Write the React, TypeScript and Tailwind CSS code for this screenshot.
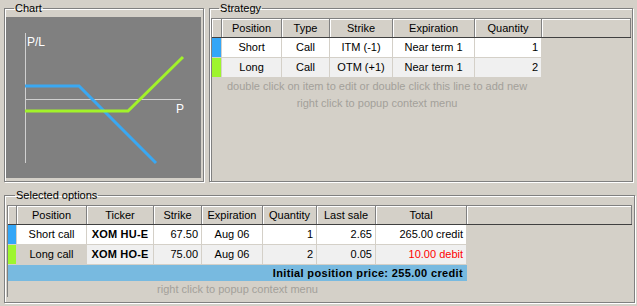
import React from 'react'

const BLUE = '#33a6f7'
const GREEN = '#9ef52e'

function GroupBox({ title, className, children }: { title: string; className: string; children: React.ReactNode }) {
  return (
    <fieldset className={`border border-[#808080] shadow-[inset_1px_1px_0_#fff,1px_1px_0_#fff] ${className}`}>
      <legend className="ml-[8px] px-[1px] leading-[13px]">{title}</legend>
      {children}
    </fieldset>
  )
}

function HeaderCell({ w, label }: { w?: number; label?: string }) {
  return (
    <div
      className={`h-full flex items-center justify-center border-r border-[#808080] shadow-[inset_1px_1px_0_#fff] ${w ? 'shrink-0' : 'flex-1'}`}
      style={w ? { width: w } : undefined}
    >
      {label}
    </div>
  )
}

type Cell = { text: string; align?: 'c' | 'r'; bold?: boolean; red?: boolean; bg?: string }

function DataRow({ widths, color, cells, bg }: { widths: number[]; color: string; cells: Cell[]; bg: string }) {
  return (
    <div className="flex h-[20px]">
      <div className="shrink-0 border-r border-b border-[#d4d0c8]" style={{ width: widths[0], background: color }} />
      {cells.map((c, i) => (
        <div
          key={i}
          className={`shrink-0 flex items-center border-r border-b border-[#d4d0c8] ${c.align === 'r' ? 'justify-end pr-[3px]' : 'justify-center'} ${c.bold ? 'font-bold tracking-[0.2px]' : ''} ${c.red ? 'text-[#ff0000]' : ''}`}
          style={{ width: widths[i + 1], background: c.bg ?? bg }}
        >
          {c.text}
        </div>
      ))}
    </div>
  )
}

function Chart() {
  return (
    <svg width="195" height="161" className="block">
      <rect width="195" height="161" fill="#808080" />
      <line x1="19.5" y1="16" x2="19.5" y2="146" stroke="#d0d0d0" strokeWidth="1" />
      <line x1="19" y1="82.5" x2="175" y2="82.5" stroke="#d0d0d0" strokeWidth="1" />
      <polyline points="19,69 73,69 150,146" fill="none" stroke="#3aa8f2" strokeWidth="3" />
      <polyline points="19,94 122,94 177,40" fill="none" stroke="#a2f22a" strokeWidth="3" />
      <text x="21" y="29" fill="#fff" fontSize="12" fontFamily="Liberation Sans, sans-serif">P/L</text>
      <text x="170" y="96" fill="#fff" fontSize="12" fontFamily="Liberation Sans, sans-serif">P</text>
    </svg>
  )
}

const stratW = [11, 60, 48, 63, 82, 67]
const selW = [10, 70, 67, 48, 61, 54, 59, 91]

export default function App() {
  return (
    <div className="w-[637px] h-[306px] bg-[#d4d0c8] font-['Liberation_Sans',sans-serif] text-[11px] text-black overflow-hidden">
      <div className="flex gap-[5px] px-[4px] pt-[2px]">
        <GroupBox title="Chart" className="w-[201px] h-[180px] px-[1px] pt-[2px]">
          <Chart />
        </GroupBox>
        <GroupBox title="Strategy" className="w-[426px] h-[180px] px-[1px] pt-[3px]">
          <div className="border-l border-t border-[#808080] h-[163px]">
            <div className="flex h-[19px] border-b border-[#404040]">
              <HeaderCell w={stratW[0] - 1} />
              <HeaderCell w={stratW[1]} label="Position" />
              <HeaderCell w={stratW[2]} label="Type" />
              <HeaderCell w={stratW[3]} label="Strike" />
              <HeaderCell w={stratW[4]} label="Expiration" />
              <HeaderCell w={stratW[5]} label="Quantity" />
              <HeaderCell />
            </div>
            <DataRow
              widths={[stratW[0] - 1, ...stratW.slice(1)]}
              color={BLUE}
              bg="#ffffff"
              cells={[
                { text: 'Short' },
                { text: 'Call' },
                { text: 'ITM (-1)' },
                { text: 'Near term 1' },
                { text: '1', align: 'r' },
              ]}
            />
            <DataRow
              widths={[stratW[0] - 1, ...stratW.slice(1)]}
              color={GREEN}
              bg="#f0f0f0"
              cells={[
                { text: 'Long' },
                { text: 'Call' },
                { text: 'OTM (+1)' },
                { text: 'Near term 1' },
                { text: '2', align: 'r' },
              ]}
            />
            <div className="w-[330px] text-center text-[#a3a09a] leading-[17px]">
              <div>double click on item to edit or double click this line to add new</div>
              <div>right click to popup context menu</div>
            </div>
          </div>
        </GroupBox>
      </div>

      <GroupBox title="Selected options" className="mt-[7px] ml-[4px] w-[631px] h-[114px] px-[2px] pt-[3px]">
        <div className="border-l border-t border-[#808080]">
          <div className="flex h-[19px] border-b border-[#404040]">
            <HeaderCell w={selW[0] - 1} />
            <HeaderCell w={selW[1]} label="Position" />
            <HeaderCell w={selW[2]} label="Ticker" />
            <HeaderCell w={selW[3]} label="Strike" />
            <HeaderCell w={selW[4]} label="Expiration" />
            <HeaderCell w={selW[5]} label="Quantity" />
            <HeaderCell w={selW[6]} label="Last sale" />
            <HeaderCell w={selW[7]} label="Total" />
            <HeaderCell />
          </div>
          <DataRow
            widths={[selW[0] - 1, ...selW.slice(1)]}
            color={BLUE}
            bg="#ffffff"
            cells={[
              { text: 'Short call' },
              { text: 'XOM HU-E', bold: true },
              { text: '67.50', align: 'r' },
              { text: 'Aug 06' },
              { text: '1', align: 'r' },
              { text: '2.65', align: 'r' },
              { text: '265.00 credit', align: 'r' },
            ]}
          />
          <DataRow
            widths={[selW[0] - 1, ...selW.slice(1)]}
            color={GREEN}
            bg="#f0f0f0"
            cells={[
              { text: 'Long call', bg: '#d4d0c8' },
              { text: 'XOM HO-E', bold: true },
              { text: '75.00', align: 'r' },
              { text: 'Aug 06' },
              { text: '2', align: 'r' },
              { text: '0.05', align: 'r' },
              { text: '10.00 debit', align: 'r', red: true },
            ]}
          />
          <div className="w-[459px] h-[16px] bg-[#78bae0] flex items-center justify-end pr-[4px] font-bold tracking-[0.35px]">
            Initial position price: 255.00 credit
          </div>
          <div className="w-[459px] text-center text-[#a3a09a] leading-[16px]">right click to popup context menu</div>
        </div>
      </GroupBox>
    </div>
  )
}
